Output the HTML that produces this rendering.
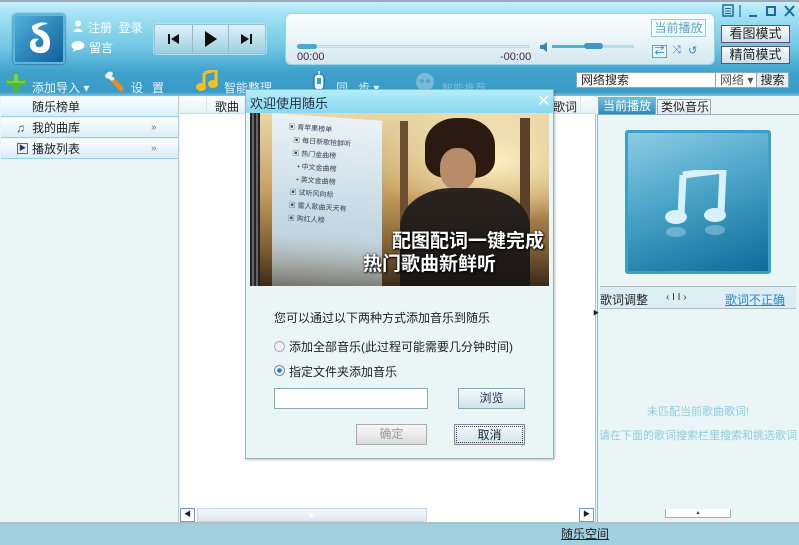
<!DOCTYPE html>
<html><head><meta charset="utf-8"><style>
*{margin:0;padding:0;box-sizing:border-box}
body{width:799px;height:545px;overflow:hidden;position:relative;font-family:"Liberation Sans","Noto Sans CJK SC",sans-serif;font-size:12px;color:#222;background:#eaf6f6}
.a{position:absolute}
.hdr{left:0;top:0;width:799px;height:96px;background:linear-gradient(#cdf2fb 0,#a8e4f5 12px,#6cc4e2 50px,#3ea2cc 72px,#3a9ac6 92px,#7cc4e0 96px)}
.t{color:#fff;font-size:12px}
.btn{background:linear-gradient(#f4f9fb,#cfe3ea);border:1px solid #7fa8b8;text-align:center}
</style></head><body>
<div class="a hdr"></div>
<div class="a" style="left:0;top:0;width:799px;height:2px;background:#9ab"></div>
<div class="a" style="left:13px;top:14px;width:52px;height:50px;border-radius:3px;background:linear-gradient(135deg,#4fb0dc,#0e5f98);border:2px solid #5ab8e0;box-shadow:0 0 2px #246"></div>
<svg class="a" style="left:20px;top:18px" width="40" height="42" viewBox="0 0 40 42"><path d="M12 8 Q22 2 28 6 Q22 6 17 11 Q30 13 30 25 Q30 36 19 35 Q9 34 10 25 Q12 19 19 21 Q14 24 16 28 Q20 31 23 27 Q25 21 18 17 Q12 15 12 8Z" fill="#fff"/></svg>
<svg class="a" style="left:72px;top:20px" width="12" height="12"><circle cx="6" cy="3.5" r="3" fill="#fff"/><path d="M1 12 Q6 5 11 12Z" fill="#fff"/></svg>
<div class="a t" style="left:88px;top:19px">注册 &nbsp;登录</div>
<svg class="a" style="left:71px;top:41px" width="14" height="11"><ellipse cx="7" cy="4.5" rx="6.5" ry="4.5" fill="#fff"/><path d="M3 8 L2 11 L6 8.5Z" fill="#fff"/></svg>
<div class="a t" style="left:89px;top:39px">留言</div>
<div class="a" style="left:154px;top:24px;width:112px;height:30px;border-radius:3px;background:linear-gradient(#dff2f8,#9fcfe0);border:1px solid #8cc4d8;box-shadow:0 0 0 1px #b0e0ee"></div>
<div class="a" style="left:192px;top:25px;width:1px;height:28px;background:#8bbccc"></div>
<div class="a" style="left:228px;top:25px;width:1px;height:28px;background:#8bbccc"></div>
<svg class="a" style="left:168px;top:33px" width="12" height="12"><rect x="0" y="1" width="2" height="10" fill="#111"/><path d="M11 1 L3 6 L11 11Z" fill="#111"/></svg>
<svg class="a" style="left:204px;top:31px" width="14" height="16"><path d="M1 0 L13 8 L1 16Z" fill="#111"/></svg>
<svg class="a" style="left:241px;top:33px" width="12" height="12"><path d="M0 1 L8 6 L0 11Z" fill="#111"/><rect x="9" y="1" width="2" height="10" fill="#111"/></svg>
<div class="a" style="left:285px;top:13px;width:430px;height:52px;border-radius:6px;background:linear-gradient(#fbfdfe,#e8f4f6 55%,#d2e8ee);border:1px solid #9ad2e4"></div>
<div class="a" style="left:297px;top:45px;width:232px;height:3px;background:#d6ecf2;border:1px solid #b8dbe6"></div>
<div class="a" style="left:297px;top:44px;width:20px;height:5px;border-radius:3px;background:#4aa8cf"></div>
<div class="a" style="left:297px;top:51px;font-size:11px;color:#424">00:00</div>
<div class="a" style="left:500px;top:51px;font-size:11px;color:#424">-00:00</div>
<svg class="a" style="left:540px;top:42px" width="10" height="10"><path d="M0 3 H3 L7 0 V10 L3 7 H0Z" fill="#2a8ab8"/></svg>
<div class="a" style="left:552px;top:45px;width:82px;height:3px;background:#b6dfec"></div>
<div class="a" style="left:552px;top:45px;width:40px;height:3px;background:#4ab0d8"></div>
<div class="a" style="left:584px;top:43px;width:19px;height:6px;border-radius:3px;background:#3a98c4"></div>
<div class="a btn" style="left:651px;top:19px;width:55px;height:18px;color:#5aa8c8;line-height:16px;background:#f4fafc;border-color:#9cc8d8">当前播放</div>
<div class="a" style="left:652px;top:45px;width:15px;height:13px;border:1px solid #6aa;background:#e8f4f8;color:#1a7ab0;font-size:10px;text-align:center;line-height:11px">⇄</div>
<div class="a" style="left:672px;top:44px;color:#2a8ac0;font-size:11px">⤨</div>
<div class="a" style="left:688px;top:44px;color:#2a8ac0;font-size:11px">↺</div>
<svg class="a" style="left:722px;top:4px" width="76" height="14"><rect x="1" y="1" width="10" height="11" fill="none" stroke="#1e6a9a" stroke-width="1.5"/><path d="M3 4.5H9M3 7H9M3 9.5H9" stroke="#1e6a9a"/><path d="M18 1V13" stroke="#1e6a9a" stroke-width="1.2"/><path d="M27 12H35" stroke="#1e6a9a" stroke-width="2"/><rect x="45" y="3" width="8" height="8" fill="none" stroke="#1e6a9a" stroke-width="2"/><path d="M63 2L72 12M72 2L63 12" stroke="#1e6a9a" stroke-width="2"/></svg>
<div class="a btn" style="left:721px;top:25px;width:69px;height:18px;line-height:16px;font-size:13px;background:linear-gradient(#fafdfe,#cfe2ea);border:1px solid #557">看图模式</div>
<div class="a btn" style="left:721px;top:46px;width:69px;height:18px;line-height:16px;font-size:13px;background:linear-gradient(#fafdfe,#cfe2ea);border:1px solid #557">精简模式</div>
<svg class="a" style="left:6px;top:73px" width="20" height="20"><path d="M7 0H13V7H20V13H13V20H7V13H0V7H7Z" fill="#4cb83a"/><path d="M8 1H12V8H19V10H1V8H8Z" fill="#8de070" opacity=".6"/></svg>
<div class="a t" style="left:32px;top:79px;color:#e8f6fc">添加导入 ▾</div>
<svg class="a" style="left:104px;top:70px" width="22" height="22"><path d="M3 3 Q6 0 9 3 L8 6 L18 16 Q21 19 18 21 Q16 22 14 19 L5 9 L2 8 Q0 5 3 3Z" fill="#f08a20"/><path d="M3 3 Q6 0 9 3 L8 6 L11 9 L8 11 L5 9 L2 8 Q0 5 3 3Z" fill="#e8eef2"/></svg>
<div class="a t" style="left:131px;top:79px;letter-spacing:9px;color:#e8f6fc">设置</div>
<svg class="a" style="left:196px;top:70px" width="24" height="22"><path d="M8 3 L20 0 V14 M8 3 V17" stroke="#f4c020" stroke-width="3" fill="none"/><ellipse cx="5" cy="17" rx="5" ry="4" fill="#f4c020"/><ellipse cx="17" cy="14" rx="5" ry="4" fill="#f4c020"/></svg>
<div class="a t" style="left:224px;top:79px;color:#e0f2fa">智能整理</div>
<svg class="a" style="left:313px;top:71px" width="12" height="20"><rect x="1" y="3" width="10" height="16" rx="4" fill="#e8f4f8" stroke="#1a5a8a"/><rect x="4" y="7" width="4" height="6" fill="#3a9ad0"/><path d="M6 0V3" stroke="#eef" stroke-width="1.5"/></svg>
<div class="a t" style="left:336px;top:79px;color:#e0f2fa">同 &nbsp;&nbsp;步 ▾</div>
<svg class="a" style="left:414px;top:72px" width="22" height="20" opacity=".4"><circle cx="11" cy="10" r="9" fill="#cfe6ef"/><circle cx="8" cy="9" r="2" fill="#8ab"/><circle cx="14" cy="9" r="2" fill="#8ab"/></svg>
<div class="a" style="left:442px;top:80px;color:#7fbcd8;font-size:11px">智能推荐</div>
<div class="a" style="left:576px;top:72px;width:140px;height:16px;background:#fff;border:1px solid #8ab;font-size:12px;padding-left:4px;line-height:14px">网络搜索</div>
<div class="a" style="left:715px;top:72px;width:42px;height:16px;background:#fff;border:1px solid #8ab;font-size:12px;color:#555;padding-left:4px;line-height:14px">网络 ▾</div>
<div class="a" style="left:756px;top:72px;width:33px;height:16px;background:#e4eef2;border:1px solid #8ab;font-size:12px;text-align:center;line-height:14px">搜索</div>
<div class="a" style="left:0;top:96px;width:179px;height:427px;background:#eaf6f6;border-right:1px solid #b8ccd0"></div>
<div class="a" style="left:1px;top:97px;width:177px;height:20px;background:linear-gradient(#fdfefe,#d8eef6);border-bottom:1px solid #9ccce0;padding-left:31px;line-height:20px">随乐榜单</div>
<div class="a" style="left:1px;top:118px;width:177px;height:20px;background:linear-gradient(#fdfefe,#d8eef6);border-bottom:1px solid #9ccce0;padding-left:31px;line-height:20px">我的曲库<span style="position:absolute;left:150px;color:#777;font-size:10px">»</span></div>
<div class="a" style="left:1px;top:139px;width:177px;height:20px;background:linear-gradient(#fdfefe,#d8eef6);border-bottom:1px solid #9ccce0;padding-left:31px;line-height:20px">播放列表<span style="position:absolute;left:150px;color:#777;font-size:10px">»</span></div>
<div class="a" style="left:16px;top:121px;font-size:12px;color:#356">♫</div>
<div class="a" style="left:17px;top:143px;width:11px;height:11px;border:1px solid #668;background:#e4eef4;font-size:7px;line-height:9px;text-align:center;color:#335">▶</div>
<div class="a" style="left:180px;top:96px;width:416px;height:427px;background:#fff;border-right:1px solid #b0c4c8"></div>
<div class="a" style="left:180px;top:97px;width:416px;height:17px;background:linear-gradient(#fafdfe,#e6f2f6);border-bottom:1px solid #c8dde4"></div>
<div class="a" style="left:206px;top:97px;width:1px;height:17px;background:#d6e6ec"></div>
<div class="a" style="left:215px;top:98px">歌曲</div>
<div class="a" style="left:553px;top:98px">歌词</div>
<div class="a" style="left:580px;top:97px;width:1px;height:17px;background:#d6e6ec"></div>
<div class="a" style="left:197px;top:508px;width:230px;height:14px;background:linear-gradient(#f4f8fc,#dde8f2);border:1px solid #c8d8e6"></div>
<div class="a" style="left:309px;top:513px;width:4px;height:4px;border-radius:2px;background:#fff"></div>
<div class="a" style="left:180px;top:508px;width:15px;height:14px;border:1px solid #6a9ad0;background:#fff;font-size:7px;line-height:12px;text-align:center">◀</div>
<div class="a" style="left:579px;top:508px;width:15px;height:14px;border:1px solid #6a9ad0;background:#fff;font-size:7px;line-height:12px;text-align:center">▶</div>
<div class="a" style="left:597px;top:96px;width:202px;height:427px;background:#eaf6f6"></div>
<div class="a" style="left:597px;top:114px;width:202px;height:1px;background:#9ab8c4"></div>
<div class="a" style="left:598px;top:97px;width:58px;height:18px;background:linear-gradient(#6cc0e0,#2a8cbc);color:#fff;padding-left:4px;line-height:17px;font-size:12px;border:1px solid #8ab">当前播放</div>
<div class="a" style="left:657px;top:99px;width:54px;height:16px;background:linear-gradient(#f8fbfc,#dce8ec);border:1px solid #9ab;line-height:14px;padding-left:3px">类似音乐</div>
<div class="a" style="left:597px;top:115px;width:1px;height:408px;background:#9ab8c4"></div>
<div class="a" style="left:625px;top:130px;width:146px;height:144px;border-radius:3px;border:3px solid #3aa0c8;background:linear-gradient(160deg,#8ccce4,#4aa4c8 45%,#0e6a98)"></div>
<svg class="a" style="left:664px;top:170px" width="70" height="80"><path d="M19 5 L59 0 L57 42" fill="none" stroke="#d8f2fc" stroke-width="7"/><path d="M19 5 L17 45" stroke="#d8f2fc" stroke-width="7"/><ellipse cx="12" cy="47" rx="11" ry="7" fill="#d8f2fc"/><ellipse cx="51" cy="45" rx="11" ry="7" fill="#d8f2fc"/><ellipse cx="12" cy="62" rx="10" ry="5" fill="#cfeefa" opacity=".35"/><ellipse cx="51" cy="60" rx="10" ry="5" fill="#cfeefa" opacity=".35"/></svg>
<div class="a" style="left:600px;top:286px;width:196px;height:1px;background:#a8bcc4"></div>
<div class="a" style="left:600px;top:287px;width:196px;height:22px;background:#dceef4;border-bottom:1px solid #a8bcc4"></div>
<div class="a" style="left:600px;top:291px">歌词调整</div>
<div class="a" style="left:666px;top:292px;font-size:10px;color:#333">‹ I I ›</div>
<div class="a" style="left:725px;top:291px;color:#2a8ac0;text-decoration:underline">歌词不正确</div>
<div class="a" style="left:600px;top:403px;width:196px;text-align:center;color:#8ccce0;font-size:11px">未匹配当前歌曲歌词!</div>
<div class="a" style="left:599px;top:427px;width:200px;white-space:nowrap;overflow:hidden;color:#8ccce0;font-size:11px">请在下面的歌词搜索栏里搜索和挑选歌词</div>
<div class="a" style="left:665px;top:509px;width:66px;height:9px;border:1px solid #aab;border-top:none;background:#fff;font-size:5px;text-align:center;line-height:8px">▲</div>
<div class="a" style="left:593px;top:308px;font-size:6px">▶</div>
<div class="a" style="left:0;top:522px;width:799px;height:2px;background:#b0c0c4"></div>
<div class="a" style="left:0;top:524px;width:799px;height:21px;background:#a0d0e0"></div>
<div class="a" style="left:561px;top:525px;text-decoration:underline">随乐空间</div>
<div class="a" style="left:245px;top:89px;width:309px;height:370px;background:#eaf6f6;border:1px solid #9ab4bc;box-shadow:1px 1px 2px rgba(0,0,0,.25)"></div>
<div class="a" style="left:246px;top:90px;width:307px;height:23px;background:linear-gradient(#b4ecfb,#8ad8f0)"></div>
<div class="a" style="left:250px;top:93px;font-size:13px;color:#234">欢迎使用随乐</div>
<div class="a" style="left:537px;top:91px;color:#fff;font-size:16px">✕</div>
<div class="a" style="left:250px;top:113px;width:299px;height:173px;background:linear-gradient(#e8d8a8,#c8a060 45%,#7a5a30 80%,#3a2a1a);overflow:hidden">
 <div class="a" style="left:0;top:0;width:299px;height:173px;background:radial-gradient(ellipse at 82% 28%,rgba(255,245,200,.9),transparent 35%)"></div>
 <div class="a" style="left:150px;top:8px;width:8px;height:120px;background:#6a5030"></div>
 <div class="a" style="left:270px;top:5px;width:10px;height:130px;background:#5a4028"></div>
 <div class="a" style="left:0;top:0;width:10px;height:173px;background:repeating-linear-gradient(90deg,#222 0 2px,#666 2px 4px)"></div>
 <div class="a" style="left:175px;top:5px;width:70px;height:60px;border-radius:45% 45% 30% 30%;background:#2a1a12"></div>
 <div class="a" style="left:190px;top:35px;width:36px;height:42px;border-radius:45%;background:#b88c68"></div>
 <div class="a" style="left:150px;top:75px;width:130px;height:98px;border-radius:40% 40% 0 0;background:linear-gradient(#2a2420,#1a1614)"></div>
 <div class="a" style="left:22px;top:0;width:110px;height:173px;background:linear-gradient(#eaf2f6,#c0d4e0 70%,rgba(200,220,230,.4));transform:skewY(4deg);transform-origin:0 0"></div>
 <div class="a" style="left:35px;top:10px;font-size:7px;line-height:13px;color:#345;transform:rotate(4deg)">▣ 青苹果榜单<br>&nbsp;&nbsp;&nbsp;▣ 每日新歌抢鲜听<br>&nbsp;&nbsp;&nbsp;▣ 热门金曲榜<br>&nbsp;&nbsp;&nbsp;&nbsp;&nbsp;&nbsp;• 中文金曲榜<br>&nbsp;&nbsp;&nbsp;&nbsp;&nbsp;&nbsp;• 英文金曲榜<br>&nbsp;&nbsp;&nbsp;▣ 试听风向标<br>&nbsp;&nbsp;&nbsp;▣ 雷人歌曲天天有<br>&nbsp;&nbsp;&nbsp;▣ 购红人榜</div>
 <div class="a" style="left:142px;top:113px;font-size:19px;font-weight:bold;color:#fff;text-shadow:0 0 2px #000,1px 1px 2px #000;white-space:nowrap">配图配词一键完成</div>
 <div class="a" style="left:113px;top:136px;font-size:19px;font-weight:bold;color:#fff;text-shadow:0 0 2px #000,1px 1px 2px #000;white-space:nowrap">热门歌曲新鲜听</div>
</div>
<div class="a" style="left:274px;top:309px">您可以通过以下两种方式添加音乐到随乐</div>
<div class="a" style="left:274px;top:341px;width:11px;height:11px;border-radius:6px;border:1px solid #aab;background:#eef"></div>
<div class="a" style="left:289px;top:338px">添加全部音乐(此过程可能需要几分钟时间)</div>
<div class="a" style="left:274px;top:365px;width:11px;height:11px;border-radius:6px;border:1px solid #889;background:radial-gradient(#1a7ac8 30%,#e8f0f8 40%)"></div>
<div class="a" style="left:289px;top:363px">指定文件夹添加音乐</div>
<div class="a" style="left:274px;top:388px;width:154px;height:21px;background:#fff;border:1px solid #8aa8b8"></div>
<div class="a btn" style="left:458px;top:388px;width:67px;height:21px;line-height:19px;color:#235;border-color:#8aa">浏览</div>
<div class="a btn" style="left:356px;top:424px;width:71px;height:21px;line-height:19px;color:#999;background:linear-gradient(#f8f8f8,#dcdcdc);border-color:#aaa">确定</div>
<div class="a btn" style="left:454px;top:424px;width:71px;height:21px;line-height:17px;color:#123;border-color:#889"><div style="border:1px dotted #444;margin:1px;height:17px">取消</div></div>
</body></html>
